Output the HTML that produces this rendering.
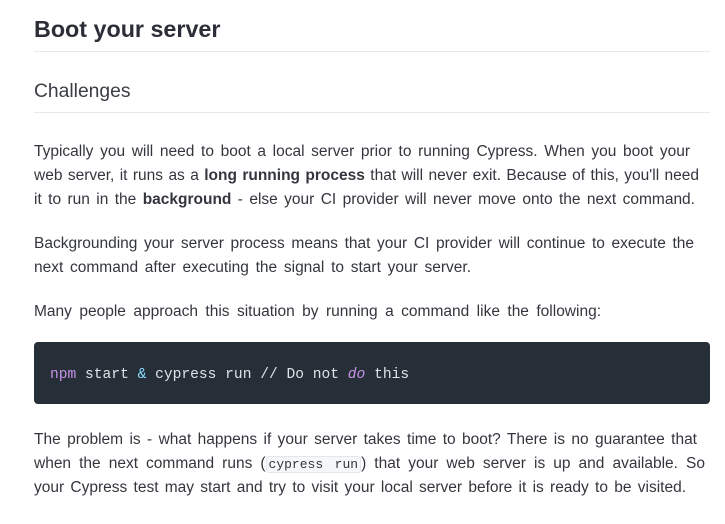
<!DOCTYPE html>
<html><head><meta charset="utf-8"><style>
body{margin:0;background:#fff;width:725px;height:524px;overflow:hidden;font-family:"Liberation Sans",sans-serif;color:#2e3138}
h1{position:absolute;left:34px;top:14px;margin:0;font-size:23.3px;line-height:30px;font-weight:bold;color:#2b2e36}
h2{position:absolute;left:34px;top:79px;margin:0;font-size:19.3px;line-height:26px;font-weight:normal;color:#3a3d44}
.rule{position:absolute;left:34px;width:676px;height:1px;background:#e8e9eb}
.p{position:absolute;left:34px;font-size:15.5px;line-height:24px;color:#33363d}
.p div{white-space:nowrap;text-align:justify;text-align-last:justify;height:24px}
.code{position:absolute;left:34px;top:342px;width:676px;height:62px;background:#262f37;border-radius:4px}
.code span.t{position:absolute;left:16px;top:25px;font-family:"Liberation Mono",monospace;font-size:14.6px;color:#dfe3e8;white-space:pre}
.ic{font-family:"Liberation Mono",monospace;font-size:13px;background:#f6f7f9;border:1px solid #e4e6ea;border-radius:3px;padding:0 2px}
</style></head><body>
<h1>Boot your server</h1>
<div class="rule" style="top:51px"></div>
<h2>Challenges</h2>
<div class="rule" style="top:112px"></div>
<div class="p" style="top:140px">
<div style="width:656px">Typically you will need to boot a local server prior to running Cypress. When you boot your</div>
<div style="width:665px">web server, it runs as a <b>long running process</b> that will never exit. Because of this, you'll need</div>
<div style="width:661px">it to run in the <b>background</b> - else your CI provider will never move onto the next command.</div>
</div>
<div class="p" style="top:232px">
<div style="width:660px">Backgrounding your server process means that your CI provider will continue to execute the</div>
<div style="width:437px">next command after executing the signal to start your server.</div>
</div>
<div class="p" style="top:300px">
<div style="width:567px">Many people approach this situation by running a command like the following:</div>
</div>
<div class="code"><span class="t"><span style="color:#c792ea">npm</span> start <span style="color:#89ddff">&amp;</span> cypress run // Do not <i style="color:#c792ea">do</i> this</span></div>
<div class="p" style="top:428px">
<div style="width:663px">The problem is - what happens if your server takes time to boot? There is no guarantee that</div>
<div style="width:671px">when the next command runs (<span class="ic">cypress&nbsp;run</span>) that your web server is up and available. So</div>
<div style="width:652px">your Cypress test may start and try to visit your local server before it is ready to be visited.</div>
</div>
</body></html>
